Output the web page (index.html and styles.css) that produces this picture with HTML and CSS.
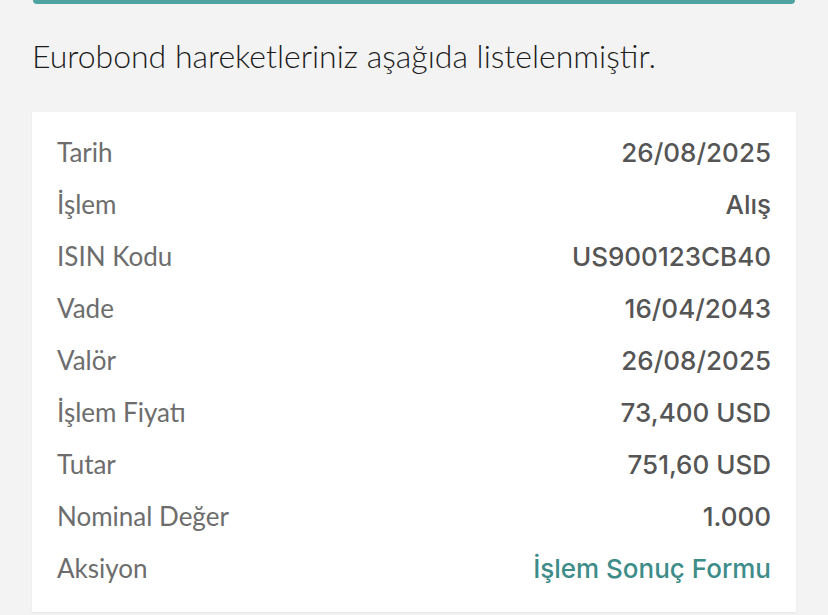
FILE: index.html
```html
<!DOCTYPE html>
<html lang="tr">
<head>
<meta charset="utf-8">
<link rel="stylesheet" href="styles.css">
</head>
<body>
<div class="page">
  <div class="topbar"></div>
  <p class="intro">Eurobond hareketleriniz aşağıda listelenmiştir.</p>
  <div class="card">
    <div class="row"><span class="label">Tarih</span><span class="value">26/08/2025</span></div>
    <div class="row"><span class="label">İşlem</span><span class="value">Alış</span></div>
    <div class="row"><span class="label">ISIN Kodu</span><span class="value">US900123CB40</span></div>
    <div class="row"><span class="label">Vade</span><span class="value">16/04/2043</span></div>
    <div class="row"><span class="label">Valör</span><span class="value">26/08/2025</span></div>
    <div class="row"><span class="label">İşlem Fiyatı</span><span class="value">73,400 USD</span></div>
    <div class="row"><span class="label">Tutar</span><span class="value">751,60 USD</span></div>
    <div class="row"><span class="label">Nominal Değer</span><span class="value">1.000</span></div>
    <div class="row"><span class="label">Aksiyon</span><a class="value link" href="#">İşlem Sonuç Formu</a></div>
  </div>
</div>
</body>
</html>
```
FILE: styles.css
```css
* { box-sizing: border-box; }
html, body { margin: 0; padding: 0; }
body {
  background: #f3f3f3;
  font-family: Lato, "Liberation Sans", sans-serif;
  width: 828px;
  height: 615px;
  overflow: hidden;
}
.page {
  padding: 0 32px;
}
.topbar {
  height: 4px;
  margin: 0 1px;
  background: #4ea3a2;
  border-radius: 0 0 6px 6px;
}
.intro {
  margin: 0;
  padding-top: 32px;
  height: 108px;
  font-size: 32px;
  font-weight: 300;
  color: #1c1c1c;
  line-height: 40px;
}
.card {
  background: #ffffff;
  padding: 14px 25px 18px 25px;
  box-shadow: 0 1px 2px rgba(0,0,0,0.06);
}
.row {
  display: flex;
  justify-content: space-between;
  align-items: center;
  height: 52px;
}
.label {
  font-size: 26px;
  color: #6d6d6d;
  font-weight: 400;
}
.value {
  font-family: Inter, "Open Sans", sans-serif;
  font-size: 26px;
  font-weight: 500;
  color: #555555;
  text-decoration: none;
}
.link {
  color: #3d8c89;
}
```
